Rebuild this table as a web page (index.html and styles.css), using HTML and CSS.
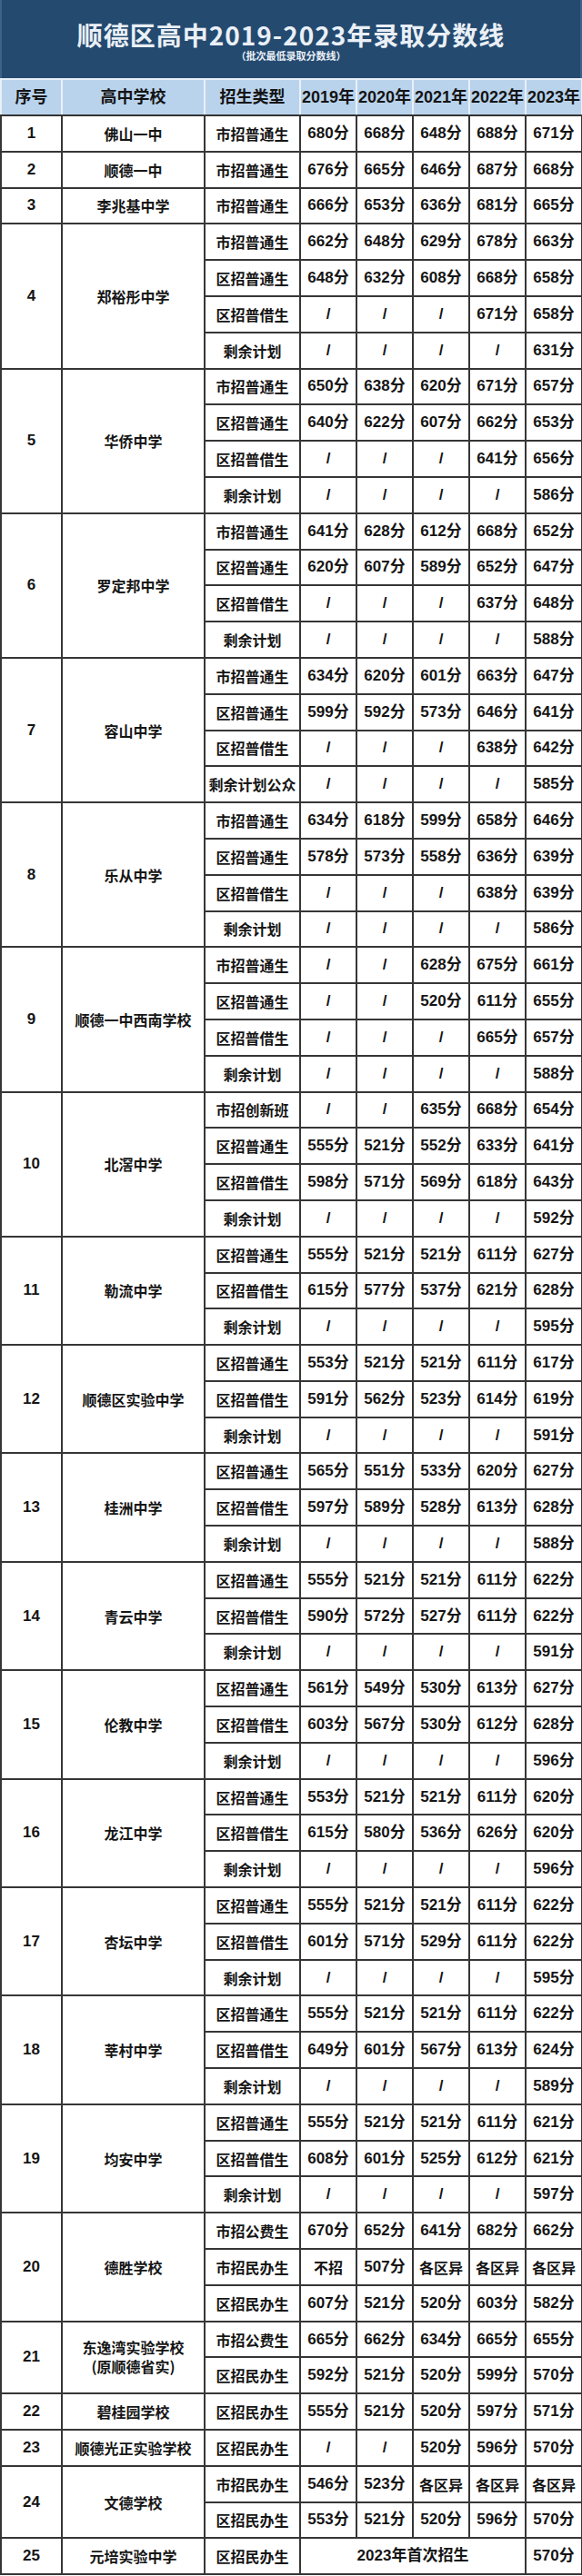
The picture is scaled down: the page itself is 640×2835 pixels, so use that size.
FILE: index.html
```html
<!DOCTYPE html>
<html lang="zh-CN">
<head>
<meta charset="utf-8">
<title>顺德区高中2019-2023年录取分数线</title>
<link rel="stylesheet" href="styles.css">
</head>
<body>
<div class="banner">
  <div class="title">顺德区高中2019-2023年录取分数线</div>
  <div class="subtitle">（批次最低录取分数线）</div>
</div>
<table class="scores">
  <colgroup>
    <col class="c-n"><col class="c-s"><col class="c-k">
    <col class="c-y"><col class="c-y"><col class="c-y"><col class="c-y"><col class="c-y">
  </colgroup>
  <thead>
    <tr><th>序号</th><th>高中学校</th><th>招生类型</th><th>2019年</th><th>2020年</th><th>2021年</th><th>2022年</th><th>2023年</th></tr>
  </thead>
  <tbody>
    <tr><td class="n">1</td><td class="s">佛山一中</td><td class="k">市招普通生</td><td>680分</td><td>668分</td><td>648分</td><td>688分</td><td>671分</td></tr>
    <tr><td class="n">2</td><td class="s">顺德一中</td><td class="k">市招普通生</td><td>676分</td><td>665分</td><td>646分</td><td>687分</td><td>668分</td></tr>
    <tr><td class="n">3</td><td class="s">李兆基中学</td><td class="k">市招普通生</td><td>666分</td><td>653分</td><td>636分</td><td>681分</td><td>665分</td></tr>

    <tr><td class="n" rowspan="4">4</td><td class="s" rowspan="4">郑裕彤中学</td><td class="k">市招普通生</td><td>662分</td><td>648分</td><td>629分</td><td>678分</td><td>663分</td></tr>
    <tr><td class="k">区招普通生</td><td>648分</td><td>632分</td><td>608分</td><td>668分</td><td>658分</td></tr>
    <tr><td class="k">区招普借生</td><td>/</td><td>/</td><td>/</td><td>671分</td><td>658分</td></tr>
    <tr><td class="k">剩余计划</td><td>/</td><td>/</td><td>/</td><td>/</td><td>631分</td></tr>

    <tr><td class="n" rowspan="4">5</td><td class="s" rowspan="4">华侨中学</td><td class="k">市招普通生</td><td>650分</td><td>638分</td><td>620分</td><td>671分</td><td>657分</td></tr>
    <tr><td class="k">区招普通生</td><td>640分</td><td>622分</td><td>607分</td><td>662分</td><td>653分</td></tr>
    <tr><td class="k">区招普借生</td><td>/</td><td>/</td><td>/</td><td>641分</td><td>656分</td></tr>
    <tr><td class="k">剩余计划</td><td>/</td><td>/</td><td>/</td><td>/</td><td>586分</td></tr>

    <tr><td class="n" rowspan="4">6</td><td class="s" rowspan="4">罗定邦中学</td><td class="k">市招普通生</td><td>641分</td><td>628分</td><td>612分</td><td>668分</td><td>652分</td></tr>
    <tr><td class="k">区招普通生</td><td>620分</td><td>607分</td><td>589分</td><td>652分</td><td>647分</td></tr>
    <tr><td class="k">区招普借生</td><td>/</td><td>/</td><td>/</td><td>637分</td><td>648分</td></tr>
    <tr><td class="k">剩余计划</td><td>/</td><td>/</td><td>/</td><td>/</td><td>588分</td></tr>

    <tr><td class="n" rowspan="4">7</td><td class="s" rowspan="4">容山中学</td><td class="k">市招普通生</td><td>634分</td><td>620分</td><td>601分</td><td>663分</td><td>647分</td></tr>
    <tr><td class="k">区招普通生</td><td>599分</td><td>592分</td><td>573分</td><td>646分</td><td>641分</td></tr>
    <tr><td class="k">区招普借生</td><td>/</td><td>/</td><td>/</td><td>638分</td><td>642分</td></tr>
    <tr><td class="k">剩余计划公众</td><td>/</td><td>/</td><td>/</td><td>/</td><td>585分</td></tr>

    <tr><td class="n" rowspan="4">8</td><td class="s" rowspan="4">乐从中学</td><td class="k">市招普通生</td><td>634分</td><td>618分</td><td>599分</td><td>658分</td><td>646分</td></tr>
    <tr><td class="k">区招普通生</td><td>578分</td><td>573分</td><td>558分</td><td>636分</td><td>639分</td></tr>
    <tr><td class="k">区招普借生</td><td>/</td><td>/</td><td>/</td><td>638分</td><td>639分</td></tr>
    <tr><td class="k">剩余计划</td><td>/</td><td>/</td><td>/</td><td>/</td><td>586分</td></tr>

    <tr><td class="n" rowspan="4">9</td><td class="s" rowspan="4">顺德一中西南学校</td><td class="k">市招普通生</td><td>/</td><td>/</td><td>628分</td><td>675分</td><td>661分</td></tr>
    <tr><td class="k">区招普通生</td><td>/</td><td>/</td><td>520分</td><td>611分</td><td>655分</td></tr>
    <tr><td class="k">区招普借生</td><td>/</td><td>/</td><td>/</td><td>665分</td><td>657分</td></tr>
    <tr><td class="k">剩余计划</td><td>/</td><td>/</td><td>/</td><td>/</td><td>588分</td></tr>

    <tr><td class="n" rowspan="4">10</td><td class="s" rowspan="4">北滘中学</td><td class="k">市招创新班</td><td>/</td><td>/</td><td>635分</td><td>668分</td><td>654分</td></tr>
    <tr><td class="k">区招普通生</td><td>555分</td><td>521分</td><td>552分</td><td>633分</td><td>641分</td></tr>
    <tr><td class="k">区招普借生</td><td>598分</td><td>571分</td><td>569分</td><td>618分</td><td>643分</td></tr>
    <tr><td class="k">剩余计划</td><td>/</td><td>/</td><td>/</td><td>/</td><td>592分</td></tr>

    <tr><td class="n" rowspan="3">11</td><td class="s" rowspan="3">勒流中学</td><td class="k">区招普通生</td><td>555分</td><td>521分</td><td>521分</td><td>611分</td><td>627分</td></tr>
    <tr><td class="k">区招普借生</td><td>615分</td><td>577分</td><td>537分</td><td>621分</td><td>628分</td></tr>
    <tr><td class="k">剩余计划</td><td>/</td><td>/</td><td>/</td><td>/</td><td>595分</td></tr>

    <tr><td class="n" rowspan="3">12</td><td class="s" rowspan="3">顺德区实验中学</td><td class="k">区招普通生</td><td>553分</td><td>521分</td><td>521分</td><td>611分</td><td>617分</td></tr>
    <tr><td class="k">区招普借生</td><td>591分</td><td>562分</td><td>523分</td><td>614分</td><td>619分</td></tr>
    <tr><td class="k">剩余计划</td><td>/</td><td>/</td><td>/</td><td>/</td><td>591分</td></tr>

    <tr><td class="n" rowspan="3">13</td><td class="s" rowspan="3">桂洲中学</td><td class="k">区招普通生</td><td>565分</td><td>551分</td><td>533分</td><td>620分</td><td>627分</td></tr>
    <tr><td class="k">区招普借生</td><td>597分</td><td>589分</td><td>528分</td><td>613分</td><td>628分</td></tr>
    <tr><td class="k">剩余计划</td><td>/</td><td>/</td><td>/</td><td>/</td><td>588分</td></tr>

    <tr><td class="n" rowspan="3">14</td><td class="s" rowspan="3">青云中学</td><td class="k">区招普通生</td><td>555分</td><td>521分</td><td>521分</td><td>611分</td><td>622分</td></tr>
    <tr><td class="k">区招普借生</td><td>590分</td><td>572分</td><td>527分</td><td>611分</td><td>622分</td></tr>
    <tr><td class="k">剩余计划</td><td>/</td><td>/</td><td>/</td><td>/</td><td>591分</td></tr>

    <tr><td class="n" rowspan="3">15</td><td class="s" rowspan="3">伦教中学</td><td class="k">区招普通生</td><td>561分</td><td>549分</td><td>530分</td><td>613分</td><td>627分</td></tr>
    <tr><td class="k">区招普借生</td><td>603分</td><td>567分</td><td>530分</td><td>612分</td><td>628分</td></tr>
    <tr><td class="k">剩余计划</td><td>/</td><td>/</td><td>/</td><td>/</td><td>596分</td></tr>

    <tr><td class="n" rowspan="3">16</td><td class="s" rowspan="3">龙江中学</td><td class="k">区招普通生</td><td>553分</td><td>521分</td><td>521分</td><td>611分</td><td>620分</td></tr>
    <tr><td class="k">区招普借生</td><td>615分</td><td>580分</td><td>536分</td><td>626分</td><td>620分</td></tr>
    <tr><td class="k">剩余计划</td><td>/</td><td>/</td><td>/</td><td>/</td><td>596分</td></tr>

    <tr><td class="n" rowspan="3">17</td><td class="s" rowspan="3">杏坛中学</td><td class="k">区招普通生</td><td>555分</td><td>521分</td><td>521分</td><td>611分</td><td>622分</td></tr>
    <tr><td class="k">区招普借生</td><td>601分</td><td>571分</td><td>529分</td><td>611分</td><td>622分</td></tr>
    <tr><td class="k">剩余计划</td><td>/</td><td>/</td><td>/</td><td>/</td><td>595分</td></tr>

    <tr><td class="n" rowspan="3">18</td><td class="s" rowspan="3">莘村中学</td><td class="k">区招普通生</td><td>555分</td><td>521分</td><td>521分</td><td>611分</td><td>622分</td></tr>
    <tr><td class="k">区招普借生</td><td>649分</td><td>601分</td><td>567分</td><td>613分</td><td>624分</td></tr>
    <tr><td class="k">剩余计划</td><td>/</td><td>/</td><td>/</td><td>/</td><td>589分</td></tr>

    <tr><td class="n" rowspan="3">19</td><td class="s" rowspan="3">均安中学</td><td class="k">区招普通生</td><td>555分</td><td>521分</td><td>521分</td><td>611分</td><td>621分</td></tr>
    <tr><td class="k">区招普借生</td><td>608分</td><td>601分</td><td>525分</td><td>612分</td><td>621分</td></tr>
    <tr><td class="k">剩余计划</td><td>/</td><td>/</td><td>/</td><td>/</td><td>597分</td></tr>

    <tr><td class="n" rowspan="3">20</td><td class="s" rowspan="3">德胜学校</td><td class="k">市招公费生</td><td>670分</td><td>652分</td><td>641分</td><td>682分</td><td>662分</td></tr>
    <tr><td class="k">市招民办生</td><td class="w">不招</td><td>507分</td><td class="w">各区异</td><td class="w">各区异</td><td class="w">各区异</td></tr>
    <tr><td class="k">区招民办生</td><td>607分</td><td>521分</td><td>520分</td><td>603分</td><td>582分</td></tr>

    <tr><td class="n" rowspan="2">21</td><td class="s two" rowspan="2">东逸湾实验学校<br>(原顺德省实)</td><td class="k">市招公费生</td><td>665分</td><td>662分</td><td>634分</td><td>665分</td><td>655分</td></tr>
    <tr><td class="k">区招民办生</td><td>592分</td><td>521分</td><td>520分</td><td>599分</td><td>570分</td></tr>

    <tr><td class="n">22</td><td class="s">碧桂园学校</td><td class="k">区招民办生</td><td>555分</td><td>521分</td><td>520分</td><td>597分</td><td>571分</td></tr>
    <tr><td class="n">23</td><td class="s">顺德光正实验学校</td><td class="k">区招民办生</td><td>/</td><td>/</td><td>520分</td><td>596分</td><td>570分</td></tr>

    <tr><td class="n" rowspan="2">24</td><td class="s" rowspan="2">文德学校</td><td class="k">市招民办生</td><td>546分</td><td>523分</td><td class="w">各区异</td><td class="w">各区异</td><td class="w">各区异</td></tr>
    <tr><td class="k">区招民办生</td><td>553分</td><td>521分</td><td>520分</td><td>596分</td><td>570分</td></tr>

    <tr><td class="n">25</td><td class="s">元培实验中学</td><td class="k">区招民办生</td><td colspan="4">2023年首次招生</td><td>570分</td></tr>
  </tbody>
</table>
</body>
</html>
```

FILE: styles.css
```css
html, body {
  margin: 0;
  padding: 0;
  background: #ffffff;
}

body {
  width: 640px;
  font-family: "Liberation Sans Narrow", "Liberation Sans", "Noto Sans CJK SC", sans-serif;
  color: #151515;
}

.banner {
  height: 86px;
  background: #244a70;
  display: flex;
  flex-direction: column;
  align-items: center;
  color: #eaf0f6;
  box-sizing: border-box;
  border-left: 2px solid #3f6288;
  border-right: 2px solid #3f6288;
}

.title {
  margin-top: 24px;
  font-family: "Noto Sans CJK SC", sans-serif;
  font-size: 28px;
  line-height: 28px;
  font-weight: 700;
  letter-spacing: 1px;
}

.subtitle {
  margin-top: 2px;
  font-family: "Noto Sans CJK SC", sans-serif;
  font-size: 11px;
  line-height: 14px;
  font-weight: 700;
}

.scores {
  width: 640px;
  border-collapse: collapse;
  table-layout: fixed;
}

.c-n { width: 67px; }
.c-s { width: 157px; }
.c-k { width: 105px; }
.c-y { width: 62px; }

.scores th {
  height: 38px;
  padding: 0;
  background: #b9d3ec;
  border: 2px solid #e9f0f7;
  border-bottom: 2px solid #333333;
  font-size: 18px;
  line-height: 20px;
  font-weight: 700;
  color: #141414;
  text-align: center;
  vertical-align: middle;
}

.scores td {
  height: 37.8px;
  padding: 0;
  border: 2px solid #363636;
  text-align: center;
  vertical-align: middle;
  font-size: 17px;
  line-height: 20px;
  font-weight: 700;
  white-space: nowrap;
}

.scores td.s,
.scores td.k,
.scores td.w {
  font-family: "Noto Sans CJK SC", sans-serif;
  font-size: 16px;
}

.scores td.two {
  line-height: 21px;
}
```
